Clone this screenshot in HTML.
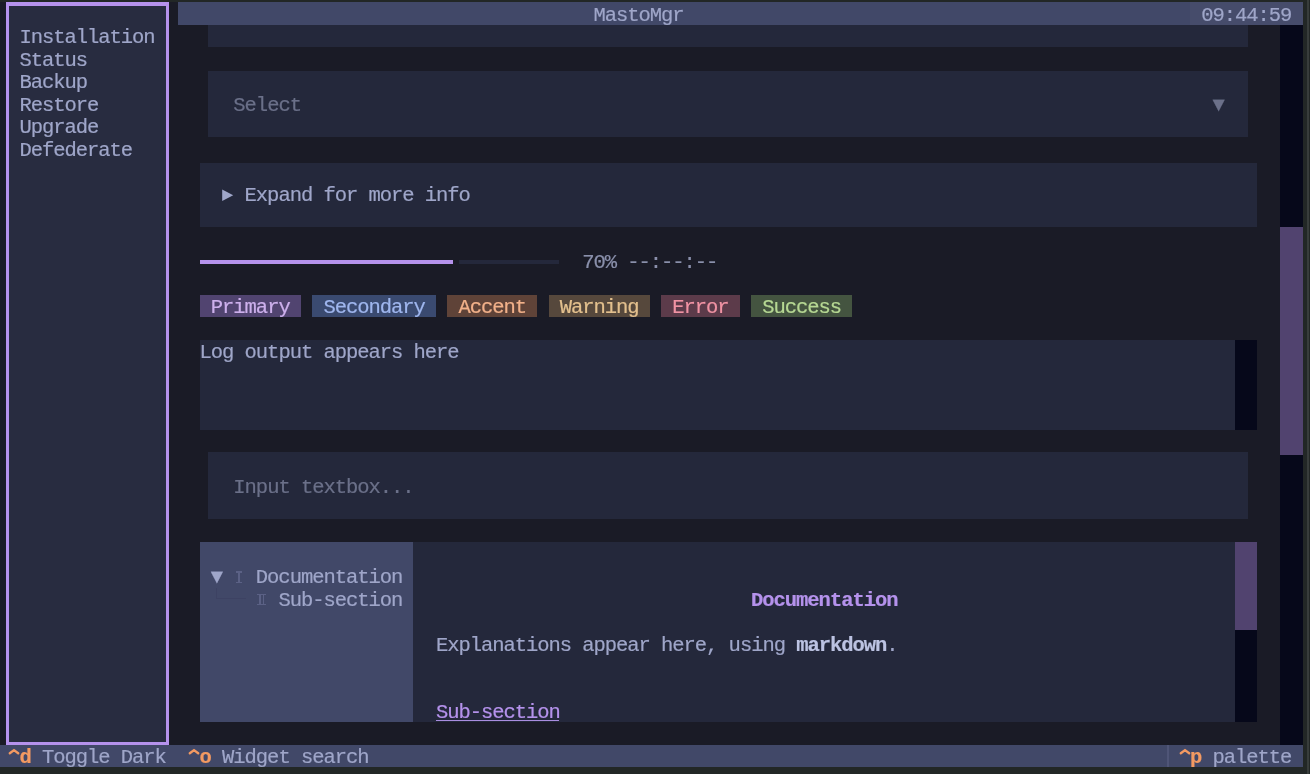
<!DOCTYPE html>
<html><head><meta charset="utf-8"><style>
html,body{margin:0;padding:0;}
body{width:1310px;height:774px;overflow:hidden;position:relative;background:#222726;}
body>div{position:absolute;}
.t{font-family:"Liberation Mono",monospace;font-size:20.5px;letter-spacing:-1.045px;line-height:22.5px;height:22.5px;white-space:pre;-webkit-text-stroke:0.2px;filter:blur(0.4px);}
</style></head><body>
<div style="left:-3.00px;top:2.00px;width:1305.60px;height:765.00px;background:#1a1b26;"></div>
<div style="left:1306.80px;top:0.00px;width:2.70px;height:774.00px;background:#383d3c;"></div>
<div style="left:5.50px;top:2.00px;width:163.50px;height:743.00px;background:#b592ec;"></div>
<div style="left:8.50px;top:5.50px;width:157.50px;height:736.50px;background:#282c40;"></div>
<div class="t" style="left:19.51px;top:27.19px;color:#9fa6c9;">Installation</div>
<div class="t" style="left:19.51px;top:49.69px;color:#9fa6c9;">Status</div>
<div class="t" style="left:19.51px;top:72.19px;color:#9fa6c9;">Backup</div>
<div class="t" style="left:19.51px;top:94.69px;color:#9fa6c9;">Restore</div>
<div class="t" style="left:19.51px;top:117.19px;color:#9fa6c9;">Upgrade</div>
<div class="t" style="left:19.51px;top:139.69px;color:#9fa6c9;">Defederate</div>
<div style="left:177.60px;top:2.00px;width:1125.00px;height:22.50px;background:#414868;"></div>
<div style="left:1190.03px;top:2.00px;width:112.57px;height:22.50px;background:#464c6b;"></div>
<div class="t" style="left:593.51px;top:4.69px;color:#9fa6c9;">MastoMgr</div>
<div class="t" style="left:1201.29px;top:4.69px;color:#9fa6c9;">09:44:59</div>
<div style="left:1279.60px;top:24.50px;width:23.00px;height:720.50px;background:#06081a;"></div>
<div style="left:1279.60px;top:227.40px;width:23.00px;height:227.30px;background:#51436f;"></div>
<div style="left:208.40px;top:24.50px;width:1039.40px;height:22.50px;background:#24283b;"></div>
<div style="left:208.40px;top:70.60px;width:1039.40px;height:66.40px;background:#24283b;"></div>
<div class="t" style="left:233.36px;top:94.69px;color:#6b7089;">Select</div>
<div class="t" style="left:1212.54px;top:94.69px;color:#6b7089;">▼</div>
<div style="left:199.90px;top:162.60px;width:1057.20px;height:64.40px;background:#24283b;"></div>
<svg style="position:absolute;left:0;top:0;filter:blur(0.4px)" width="240" height="210"><polygon points="222.2,189.6 233.2,195.3 222.2,201.0" fill="#9fa6c9"/></svg>
<div class="t" style="left:244.61px;top:184.69px;color:#9fa6c9;">Expand&#160;for&#160;more&#160;info</div>
<div style="left:199.60px;top:259.50px;width:253.70px;height:4.50px;background:#b592ec;"></div>
<div style="left:458.80px;top:259.50px;width:100.70px;height:4.50px;background:#24283b;"></div>
<div class="t" style="left:582.26px;top:252.19px;color:#8a90ab;">70%</div>
<div class="t" style="left:627.28px;top:252.19px;color:#8a90ab;">--:--:--</div>
<div style="left:199.59px;top:295.20px;width:101.30px;height:22.00px;background:#514470;"></div>
<div class="t" style="left:210.85px;top:297.19px;color:#cdb0ec;">Primary</div>
<div style="left:312.14px;top:295.20px;width:123.81px;height:22.00px;background:#3a4a70;"></div>
<div class="t" style="left:323.40px;top:297.19px;color:#9fb6ee;">Secondary</div>
<div style="left:447.20px;top:295.20px;width:90.04px;height:22.00px;background:#5f4338;"></div>
<div class="t" style="left:458.46px;top:297.19px;color:#f2b18a;">Accent</div>
<div style="left:548.50px;top:295.20px;width:101.30px;height:22.00px;background:#56483c;"></div>
<div class="t" style="left:559.75px;top:297.19px;color:#e3c08e;">Warning</div>
<div style="left:661.05px;top:295.20px;width:78.78px;height:22.00px;background:#5c3b4a;"></div>
<div class="t" style="left:672.30px;top:297.19px;color:#f193a4;">Error</div>
<div style="left:751.09px;top:295.20px;width:101.30px;height:22.00px;background:#445440;"></div>
<div class="t" style="left:762.34px;top:297.19px;color:#b6d893;">Success</div>
<div style="left:199.60px;top:340.20px;width:1035.50px;height:89.50px;background:#24283b;"></div>
<div style="left:1235.10px;top:340.20px;width:22.00px;height:89.50px;background:#06081a;"></div>
<div class="t" style="left:199.59px;top:342.19px;color:#9fa6c9;">Log&#160;output&#160;appears&#160;here</div>
<div style="left:208.40px;top:452.10px;width:1039.40px;height:67.40px;background:#24283b;"></div>
<div class="t" style="left:233.36px;top:477.19px;color:#6b7089;">Input&#160;textbox...</div>
<div style="left:199.80px;top:541.90px;width:213.40px;height:180.60px;background:#414868;"></div>
<div class="t" style="left:210.85px;top:567.19px;color:#9fa6c9;">▼</div>
<div style="left:236.00px;top:571.30px;width:6.20px;height:1.30px;background:#5b6185;"></div>
<div style="left:238.30px;top:571.30px;width:1.60px;height:11.60px;background:#5b6185;"></div>
<div style="left:236.00px;top:581.60px;width:6.20px;height:1.30px;background:#5b6185;"></div>
<div class="t" style="left:255.87px;top:567.19px;color:#9fa6c9;">Documentation</div>
<div style="left:257.00px;top:593.80px;width:9.30px;height:1.30px;background:#5b6185;"></div>
<div style="left:259.00px;top:593.80px;width:1.60px;height:11.20px;background:#5b6185;"></div>
<div style="left:262.70px;top:593.80px;width:1.60px;height:11.20px;background:#5b6185;"></div>
<div style="left:257.00px;top:603.70px;width:9.30px;height:1.30px;background:#5b6185;"></div>
<div class="t" style="left:278.38px;top:589.69px;color:#9fa6c9;">Sub-section</div>
<div style="left:215.80px;top:587.60px;width:1.00px;height:11.20px;background:#3d4263;"></div>
<div style="left:215.80px;top:597.80px;width:29.90px;height:1.00px;background:#3d4263;"></div>
<div style="left:413.20px;top:541.90px;width:821.90px;height:180.60px;background:#24283b;"></div>
<div style="left:1235.10px;top:541.90px;width:22.00px;height:180.60px;background:#06081a;"></div>
<div style="left:1235.10px;top:541.90px;width:22.00px;height:88.10px;background:#51436f;"></div>
<div class="t" style="left:751.09px;top:589.69px;color:#b592ec;font-weight:bold;">Documentation</div>
<div class="t" style="left:435.95px;top:634.69px;color:#9fa6c9;">Explanations&#160;appear&#160;here,&#160;using&#160;<b style="color:#bcc3e2">markdown</b>.</div>
<div class="t" style="left:435.95px;top:702.19px;color:#b592ec;">Sub-section</div>
<div style="left:436.25px;top:719.90px;width:123.20px;height:1.40px;background:#a98ddf;"></div>
<div style="left:-3.00px;top:745.00px;width:1305.60px;height:22.00px;background:#414868;"></div>
<svg style="position:absolute;left:8.26px;top:744.5px;filter:blur(0.4px)" width="12" height="22" viewBox="0 0 12 22"><polyline points="1.8,8.2 6.0,5.1 10.2,8.2" fill="none" stroke="#f39a62" stroke-width="2.4" stroke-linecap="round" stroke-linejoin="round"/></svg>
<div class="t" style="left:19.51px;top:747.19px;color:#f39a62;font-weight:bold;">d</div>
<div class="t" style="left:42.02px;top:747.19px;color:#9fa6c9;">Toggle&#160;Dark</div>
<svg style="position:absolute;left:188.34px;top:744.5px;filter:blur(0.4px)" width="12" height="22" viewBox="0 0 12 22"><polyline points="1.8,8.2 6.0,5.1 10.2,8.2" fill="none" stroke="#f39a62" stroke-width="2.4" stroke-linecap="round" stroke-linejoin="round"/></svg>
<div class="t" style="left:199.59px;top:747.19px;color:#f39a62;font-weight:bold;">o</div>
<div class="t" style="left:222.10px;top:747.19px;color:#9fa6c9;">Widget&#160;search</div>
<div style="left:1167.30px;top:745.00px;width:2.00px;height:22.00px;background:#4f5577;"></div>
<svg style="position:absolute;left:1178.78px;top:744.5px;filter:blur(0.4px)" width="12" height="22" viewBox="0 0 12 22"><polyline points="1.8,8.2 6.0,5.1 10.2,8.2" fill="none" stroke="#f39a62" stroke-width="2.4" stroke-linecap="round" stroke-linejoin="round"/></svg>
<div class="t" style="left:1190.03px;top:747.19px;color:#f39a62;font-weight:bold;">p</div>
<div class="t" style="left:1212.54px;top:747.19px;color:#9fa6c9;">palette</div>
</body></html>
